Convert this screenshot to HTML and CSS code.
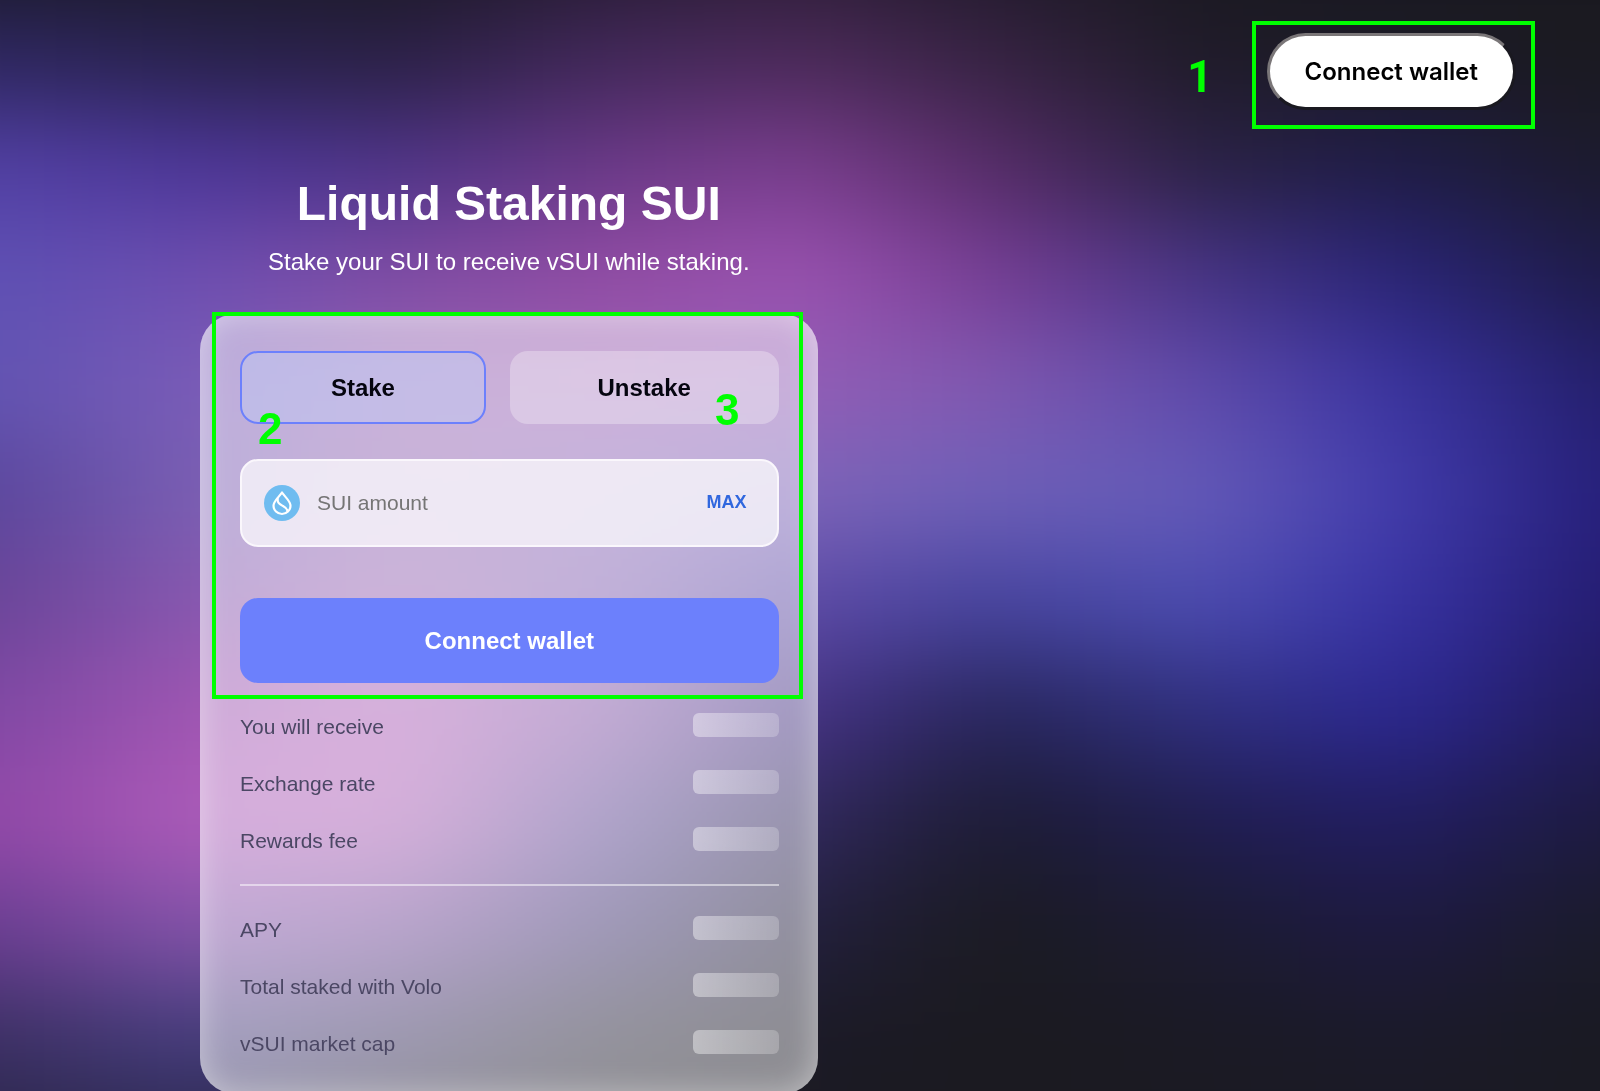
FILE: index.html
```html
<!DOCTYPE html>
<html lang="en">
<head>
    <meta charset="UTF-8">
    <meta name="viewport" content="width=device-width, initial-scale=1.0">
    <title>Liquid Staking SUI</title>
    <link rel="stylesheet" href="styles.css">
</head>
<body>
    <div class="aurora"></div>

    <header class="header">
        <span class="mark mark-one">1</span>
        <div class="wallet-frame">
            <button class="wallet-button" type="button">Connect wallet</button>
        </div>
    </header>

    <main class="main">
        <h1 class="title">Liquid Staking SUI</h1>
        <p class="subtitle">Stake your SUI to receive vSUI while staking.</p>

        <section class="card">
            <form class="stake-form">
                <div class="tabs">
                    <button class="tab tab-active" type="button">Stake</button>
                    <button class="tab" type="button">Unstake</button>
                </div>
                <div class="amount">
                    <svg class="sui-icon" viewBox="0 0 36 36" aria-hidden="true">
                        <circle cx="18" cy="18" r="18" fill="#6fbcf0"/>
                        <path d="M18 7.500C15.500 11.500 9.500 16 9.500 20.700A8.500 8.300 0 0 0 26.500 20.700C26.500 16 20.500 11.500 18 7.500Z" fill="none" stroke="#fff" stroke-width="2.200" stroke-linejoin="round"/>
                        <path d="M13.800 13C13 18 15.500 19 19 21S24 24.500 23.300 26.800" fill="none" stroke="#fff" stroke-width="2.200"/>
                    </svg>
                    <input class="amount-input" type="text" placeholder="SUI amount" aria-label="SUI amount">
                    <button class="max-button" type="button">MAX</button>
                </div>
                <button class="submit" type="button">Connect wallet</button>

                <!-- step marks over the form -->
                <div class="form-frame"></div>
                <span class="mark mark-two">2</span>
                <span class="mark mark-three">3</span>
            </form>

            <ul class="stats">
                <li class="stat">You will receive<span class="skeleton"></span></li>
                <li class="stat">Exchange rate<span class="skeleton"></span></li>
                <li class="stat">Rewards fee<span class="skeleton"></span></li>
            </ul>
            <hr class="divider">
            <ul class="stats">
                <li class="stat">APY<span class="skeleton"></span></li>
                <li class="stat">Total staked with Volo<span class="skeleton"></span></li>
                <li class="stat">vSUI market cap<span class="skeleton"></span></li>
            </ul>
        </section>
    </main>
</body>
</html>
```

FILE: styles.css
```css
* {
    box-sizing: border-box;
}
html {
    scrollbar-width: none;
}
body {
    margin: 0;
    min-height: 100vh;
    background-color: #1b1a22;
    font-family: "Liberation Sans", Arial, sans-serif;
    color: #fff;
}
button, input {
    font-family: inherit;
}
button {
    cursor: pointer;
}

/* Background: twelve colour bands melted together by the blur */
.aurora {
    position: fixed;
    top: -10vh;
    left: -10vw;
    width: 120vw;
    height: 120vh;
    z-index: -1;
    filter: blur(44px);
    background-repeat: no-repeat;
    background-size: 100% 8.6%;
    background-image:
        linear-gradient(90deg, #191824 8%, #1b1928 19%, #1b1924 29%, #251a30 40%, #2c1d35 50%, #20192a 60%, #1a1920 71%, #1a1920 81%, #1a1920 92%),
        linear-gradient(90deg, #2e2760 8%, #29224e 19%, #2a2045 29%, #42285a 40%, #4c2a5a 50%, #362342 60%, #1f1b28 71%, #1b1a26 81%, #1b1a20 92%),
        linear-gradient(90deg, #5240a4 8%, #4c3698 19%, #4e3488 29%, #6b3988 40%, #7a3e8e 50%, #562c68 60%, #2a2245 71%, #1f1c48 81%, #1c1b2c 92%),
        linear-gradient(90deg, #5e50b4 8%, #6e4eb0 19%, #7f4ca4 29%, #924ca4 40%, #9a52b0 50%, #763e94 60%, #463484 71%, #2a2578 81%, #1e1b48 92%),
        linear-gradient(90deg, #6254b2 8%, #7a5cb8 19%, #9664b4 29%, #9a60b4 40%, #925eb6 50%, #8058b0 60%, #5e4aaa 71%, #3a34a0 81%, #241f6c 92%),
        linear-gradient(90deg, #5a469c 8%, #7a60b4 19%, #9165b1 29%, #8a68b8 40%, #7c64b8 50%, #6e60b8 60%, #645ab8 71%, #423cac 81%, #261f7a 92%),
        linear-gradient(90deg, #6a4498 8%, #8858b0 19%, #9a68b4 29%, #8161b1 40%, #5c4aa6 50%, #46449e 60%, #4c4cb0 71%, #3833a4 81%, #241c70 92%),
        linear-gradient(90deg, #8048a4 8%, #a056b2 19%, #b161b9 29%, #8656a8 40%, #443284 50%, #28265c 60%, #30307f 71%, #2c2892 81%, #221b5c 92%),
        linear-gradient(90deg, #9248a8 8%, #ae5cba 19%, #ae60b6 29%, #5c4896 40%, #30285c 50%, #1d1c34 60%, #201d50 71%, #221d62 81%, #1d1b40 92%),
        linear-gradient(90deg, #6a3e92 8%, #8454aa 19%, #714999 29%, #3d3171 40%, #221f3c 50%, #1b1b22 60%, #1c1b32 71%, #1d1a40 81%, #1b1b2a 92%),
        linear-gradient(90deg, #3c3064 8%, #463e7e 19%, #393161 29%, #272536 40%, #1b1a26 50%, #1b1a20 60%, #1b1a24 71%, #1b1a2a 81%, #1a1a22 92%),
        linear-gradient(90deg, #2a2648 8%, #2c2850 19%, #25222e 29%, #1e1d24 40%, #1b1a22 50%, #1b1a20 60%, #1a1a22 71%, #1a1a24 81%, #1a1a22 92%);
    background-position: 0 0, 0 9.09%, 0 18.18%, 0 27.27%, 0 36.36%, 0 45.45%, 0 54.54%, 0 63.63%, 0 72.72%, 0 81.81%, 0 90.9%, 0 100%;
}

/* Green step marks */
.mark {
    font-size: 44px;
    line-height: 44px;
    font-weight: 700;
    color: #0f0;
}
.mark-one {
    padding-top: 4px;
    font-family: Roboto, sans-serif;
}
.mark-two, .mark-three {
    position: absolute;
    pointer-events: none;
}
.mark-two {
    top: 56px;
    left: 18px;
}
.mark-three {
    top: 37px;
    right: 39px;
}
.form-frame {
    position: absolute;
    top: -39px;
    right: -24px;
    bottom: -16px;
    left: -28px;
    border: 4px solid #0f0;
    pointer-events: none;
}

/* Header */
.header {
    display: flex;
    justify-content: flex-end;
    align-items: center;
    gap: 39px;
    padding: 21px 65px 0;
}
.wallet-frame {
    padding: 8px 15px 15px 11px;
    border: 4px solid #0f0;
}
.wallet-button {
    display: block;
    height: 77px;
    padding: 0 35px;
    border: 3px solid;
    border-color: #7a7678 #1a1920 #1a1920 #7a7678;
    border-radius: 40px;
    background-color: #fff;
    font-family: Inter, sans-serif;
    font-size: 24px;
    font-weight: 600;
    color: #000;
}

/* Staking card */
.main {
    width: 38.6%;
    min-width: 520px;
    margin-left: 12.5%;
    padding-top: 47px;
}
.title {
    margin: 0 0 14px;
    font-size: 48px;
    line-height: 56px;
    text-align: center;
}
.subtitle {
    margin: 0 0 36px;
    font-size: 24px;
    line-height: 32px;
    text-align: center;
}
.card {
    padding: 37px 39px 36px 40px;
    border-radius: 36px;
    background-color: rgba(255, 255, 255, 0.5);
    box-shadow: inset 0 0 32px rgba(255, 255, 255, 0.45);
}
.stake-form {
    position: relative;
    margin-bottom: 30px;
}
.tabs {
    display: flex;
    gap: 24px;
    margin-bottom: 35px;
}
.tab {
    flex: 11 1 0;
    height: 73px;
    border: 2px solid transparent;
    border-radius: 18px;
    background-color: rgba(255, 255, 255, 0.3);
    font-size: 24px;
    font-weight: 700;
    color: #05050f;
}
.tab-active {
    flex-grow: 10;
    border-color: #6c80fc;
    background-color: rgba(190, 205, 250, 0.4);
}
.amount {
    display: flex;
    align-items: center;
    height: 88px;
    margin-bottom: 51px;
    padding: 0 30px 0 22px;
    border: 2px solid #faf7fc;
    border-radius: 18px;
    background-color: rgba(255, 255, 255, 0.7);
}
.sui-icon {
    flex: none;
    width: 36px;
    height: 36px;
}
.amount-input {
    flex: 1;
    min-width: 0;
    padding: 0 17px;
    border: 0;
    background: none;
    font-size: 21px;
    color: #05050f;
}
.amount-input::placeholder {
    color: #757575;
}
.max-button {
    padding: 0 0 2px;
    border: 0;
    background: none;
    font-size: 18px;
    font-weight: 700;
    color: #3067de;
}
.submit {
    display: block;
    width: 100%;
    height: 85px;
    border: 0;
    border-radius: 18px;
    background-color: #6c80fc;
    font-size: 24px;
    font-weight: 700;
    color: #fff;
}

/* Figures below the form */
.stats {
    display: grid;
    gap: 29px;
    margin: 0;
    padding: 0;
    list-style: none;
}
.stat {
    display: flex;
    justify-content: space-between;
    align-items: flex-start;
    font-size: 21px;
    line-height: 28px;
    color: #4b4764;
}
.skeleton {
    width: 86px;
    height: 24px;
    border-radius: 6px;
    background: linear-gradient(90deg, rgba(255, 255, 255, 0.42), rgba(255, 255, 255, 0.22));
}
.divider {
    height: 2px;
    margin: 29px 0 30px;
    border: 0;
    background-color: rgba(255, 255, 255, 0.5);
}
```
